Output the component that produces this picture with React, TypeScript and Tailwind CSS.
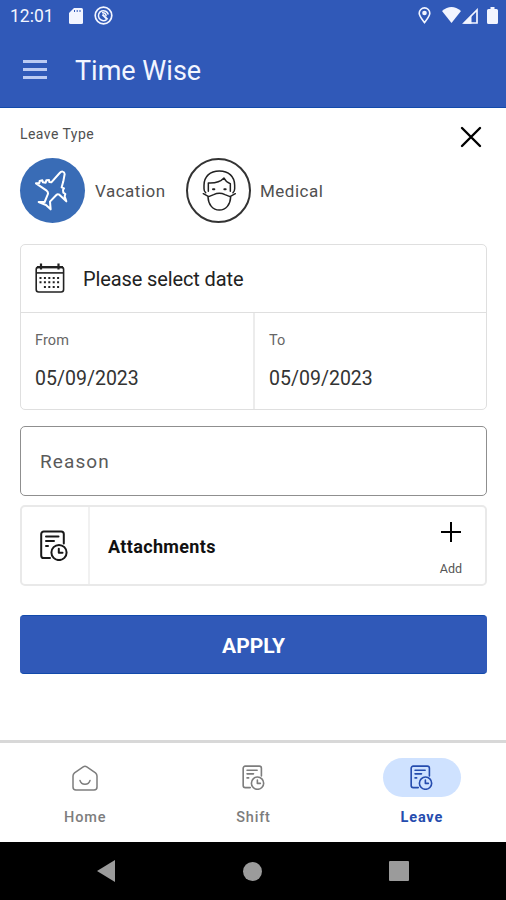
import React from "react";

type IconProps = { className?: string };

const PlaneIcon: React.FC<IconProps> = ({ className }) => (
  <svg className={className} viewBox="73 147 108 129" fill="none" stroke="currentColor" strokeWidth="6" strokeLinejoin="round" strokeLinecap="round">
    <path d="M162 162c-1-9-10-9-15-3l-25 28-6-1-1-6-8 1-2 7-8-1-2-6-8 2-1 6-10 1 32 22q6 5 3 12l-9 22-18 0 22 9 14 13-2-23 19-20q4-4 9-1l21 20-5-15 2-7-6-4-1-8 3-5-7-3 5-18z" />
  </svg>
);

const MaskIcon: React.FC<IconProps> = ({ className }) => (
  <svg className={className} viewBox="78 60 102 123" fill="none" stroke="currentColor" strokeWidth="4.500" strokeLinejoin="round" strokeLinecap="round">
    <path d="M89 128q-5-4-5-12V106c0-26 18-43 46-43s46 17 46 43v10q0 8-5 12" />
    <path d="M97 124V99c20 1 36-3 47-15 4 9 10 14 19 17v23" />
    <path d="m82 131 16 9 15-6q17-8 34 0l15 6 16-9" />
    <path d="M96 141c1 23 14 39 34 39s33-16 34-39" />
    <path d="M111 118h4M145 118h4" strokeWidth="6" />
  </svg>
);

const CalendarIcon: React.FC<IconProps> = ({ className }) => (
  <svg className={className} viewBox="0 0 30 30" fill="none" stroke="currentColor" strokeWidth="1.600">
    <rect x="1.200" y="4" width="27.400" height="25" rx="2.500" />
    <path d="M1.500 9.900h27" />
    <path d="M2 4.200h26" strokeWidth="2.400" />
    <path d="M6 .5v6M23.500 .5v6" strokeWidth="2.200" />
    <path d="M4.500 15h21M4.500 19.300h21" strokeWidth="2" strokeDasharray="2 2.400" />
    <path d="M8.900 24h17" strokeWidth="2" strokeDasharray="2 2.400" />
  </svg>
);

const ShiftIcon: React.FC<IconProps> = ({ className }) => (
  <svg className={className} viewBox="0 0 28 31" fill="none" stroke="currentColor" strokeWidth="2" strokeLinecap="round" strokeLinejoin="round">
    <path d="M10 28H3.800A2.600 2.600 0 0 1 1.200 25.400V4a2.600 2.600 0 0 1 2.600-2.600h17.400A2.600 2.600 0 0 1 23.800 4v9.500" />
    <path d="M6 6.500h12.500M6 11h8M6 16h2" />
    <circle cx="19" cy="22.500" r="7.600" />
    <path d="M18.800 18.800v4h3.700" />
  </svg>
);

const HomeIcon: React.FC<IconProps> = ({ className }) => (
  <svg className={className} viewBox="0 0 26 26" fill="none" stroke="currentColor" strokeWidth="1.500" strokeLinecap="round" strokeLinejoin="round">
    <path d="M1 11q0-2 1.500-3.200l8.700-6q1.800-1.200 3.600 0l8.700 6Q25 9 25 11v11q0 3-3 3H4q-3 0-3-3z" />
    <path d="M8 15.500c1.500 5 8.500 5 10 0" />
  </svg>
);

const StatusBar: React.FC = () => (
  <div className="flex h-8 items-center justify-between pl-[10px] pr-[8px]">
    <div className="flex items-center">
      <span className="w-[59px] text-[17.500px] leading-8">12:01</span>
      <svg className="h-4 w-[14px]" viewBox="0 0 14 16">
        <path d="M5 0h7.500Q14 0 14 1.500v13q0 1.500-1.500 1.500h-11Q0 16 0 14.500V5z" fill="currentColor" />
        <path d="M5.500 2v2M8.200 2v2M11 2v2" stroke="#3059b8" strokeWidth="1" />
      </svg>
      <svg className="mb-[2px] ml-[11px] h-[19px] w-[19px]" viewBox="0 0 19 19" fill="none" stroke="currentColor">
        <circle cx="9.500" cy="9.500" r="8.300" strokeWidth="1.700" />
        <path d="M12.500 13.600A5 5 0 1 1 14.300 8.500" strokeWidth="1.500" />
        <path d="m8.500 8.500 5 5" strokeWidth="2" />
        <path d="M8 6.800q3.800-.6 4.200 3.400" strokeWidth="1.500" />
      </svg>
    </div>
    <div className="flex items-center">
      <svg className="mb-px h-[17px] w-[13px]" viewBox="0 0 13 17" fill="none" stroke="currentColor" strokeWidth="1.600">
        <path d="M6.500 15.600C4 12.300 1.200 9 1.200 6.200a5.300 5.300 0 0 1 10.600 0c0 2.800-2.800 6.100-5.300 9.400z" />
        <circle cx="6.500" cy="6" r="2.300" fill="currentColor" stroke="none" />
      </svg>
      <svg className="mb-[2px] ml-[11px] h-4 w-[19px]" viewBox="0 0 19 16" fill="currentColor">
        <path d="M0 4Q9.500-4 19 4L9.500 16z" />
      </svg>
      <svg className="mb-px ml-px h-4 w-4" viewBox="0 0 16 16">
        <path d="M2 15 15 2v13z" fill="none" stroke="currentColor" strokeWidth="1.700" />
        <path d="M1 15.800 9.500 7v8.800z" fill="currentColor" />
      </svg>
      <svg className="mb-px ml-[9px] h-[17px] w-[11px]" viewBox="0 0 11 17" fill="currentColor">
        <path d="M3.500 0h4v2H9.500Q11 2 11 3.500v12Q11 17 9.500 17h-8Q0 17 0 15.500v-12Q0 2 1.500 2h2z" />
      </svg>
    </div>
  </div>
);

const Header: React.FC = () => (
  <header className="h-[108px] border-b border-[#124aab] bg-[#3059b8] text-[#f2f5ff]">
    <StatusBar />
    <div className="flex h-[76px] items-center pl-[23px]">
      <div className="flex w-[24px] flex-col gap-[5px] pb-[2px]">
        <span className="h-[3px] bg-[#bccbf3]" />
        <span className="h-[3px] bg-[#bccbf3]" />
        <span className="h-[3px] bg-[#bccbf3]" />
      </div>
      <h1 className="ml-[28px] pt-[3px] text-[27px] leading-[75px]">Time Wise</h1>
    </div>
  </header>
);

const DateField: React.FC<{ label: string; value: string }> = ({ label, value }) => (
  <div className="pl-[14px] pt-[17px]">
    <p className="text-[14.500px] leading-[22px] tracking-[0.100px] text-[#666]">{label}</p>
    <p className="mt-[15px] text-[19.500px] leading-[24px] text-[#333]">{value}</p>
  </div>
);

const LeaveForm: React.FC = () => (
  <main className="h-[632px] pl-[20px] pr-[19px]">
    <div className="flex h-[50px] items-start justify-between">
      <p className="pt-[16px] text-[14px] leading-[21px] tracking-[0.450px] text-[#505050]">Leave Type</p>
      <svg className="mr-[5px] mt-[18px] h-[22px] w-[22px]" viewBox="0 0 22 22" stroke="#000" strokeWidth="2.400" strokeLinecap="round">
        <path d="m2 2 18 18M20 2 2 20" />
      </svg>
    </div>

    <div className="flex h-[65px] items-center text-[17px] tracking-[0.500px] text-[#505050]">
      <div className="flex h-[65px] w-[65px] items-center justify-center rounded-full bg-[#396cb6] text-white">
        <PlaneIcon className="h-[43px] w-[36px]" />
      </div>
      <span className="ml-[10px] w-[91px] pt-[2px]">Vacation</span>
      <div className="flex h-[65px] w-[65px] items-center justify-center rounded-full border-2 border-[#333] text-[#222]">
        <MaskIcon className="h-[41px] w-[34px]" />
      </div>
      <span className="ml-[9px] pt-[2px]">Medical</span>
    </div>

    <section className="mt-[21px] h-[166px] rounded-[5px] border border-[#dfdfdf]">
      <div className="flex h-[68px] items-center border-b border-[#dfdfdf] pl-[14px]">
        <CalendarIcon className="mb-px h-[30px] w-[30px] text-[#222]" />
        <span className="ml-[18px] text-[20px] tracking-[-0.120px] text-[#222]">Please select date</span>
      </div>
      <div className="flex h-[96px]">
        <div className="w-[234px] border-r-2 border-[#ececec]">
          <DateField label="From" value="05/09/2023" />
        </div>
        <DateField label="To" value="05/09/2023" />
      </div>
    </section>

    <div className="mt-[16px] flex h-[70px] items-center rounded-[5px] border-[1.500px] border-[#8f8f8f] pl-[19px] pt-[2px] text-[19px] tracking-[1.100px] text-[#5a5a5a]">
      Reason
    </div>

    <section className="mt-[9px] flex h-[81px] rounded-[5px] border-2 border-[#e9e9e9]">
      <div className="flex w-[68px] items-center justify-center border-r-2 border-[#f1f1f1] pr-[3px]">
        <ShiftIcon className="h-[31px] w-[28px] text-[#181818]" />
      </div>
      <span className="ml-[18px] grow self-center pt-[2px] text-[18px] font-bold tracking-[0.350px] text-[#111]">Attachments</span>
      <div className="mr-[21px] flex w-[26px] flex-col items-center">
        <svg className="mt-[15px] h-[20px] w-[20px]" viewBox="0 0 20 20" stroke="#000" strokeWidth="2">
          <path d="M10 0v20M0 10h20" />
        </svg>
        <span className="mt-[19px] text-[12.500px] leading-[16px] text-[#555]">Add</span>
      </div>
    </section>

    <button className="mt-[29px] flex h-[59px] w-full items-center justify-center rounded-[4px] border-y border-[#124aab] bg-[#3059b8] pt-[4px] text-[21px] font-bold text-white">
      APPLY
    </button>
  </main>
);

const tabs = [
  { label: "Home", icon: <HomeIcon className="h-[26px] w-[26px]" />, active: false },
  { label: "Shift", icon: <ShiftIcon className="h-[25px] w-[23px]" />, active: false },
  { label: "Leave", icon: <ShiftIcon className="h-[25px] w-[23px]" />, active: true },
];

const TabBar: React.FC = () => (
  <nav className="grid h-[102px] grid-cols-3 border-t-[3px] border-[#d8d8d8] pl-px">
    {tabs.map((t) => (
      <div
        key={t.label}
        className={`flex flex-col items-center pt-[15px] ${t.active ? "text-[#254cae]" : "text-[#7d7d7d]"}`}
      >
        <div className={`flex h-[39px] w-[78px] items-center justify-center rounded-full ${t.active ? "bg-[#cfe2ff]" : ""}`}>
          {t.icon}
        </div>
        <span className={`mt-[11px] text-[14.500px] leading-[20px] tracking-[0.800px] ${t.active ? "font-bold" : "font-medium"}`}>
          {t.label}
        </span>
      </div>
    ))}
  </nav>
);

const SystemBar: React.FC = () => (
  <footer className="flex h-[58px] items-center justify-between bg-black px-[97px] text-[#9b9b9b]">
    <svg className="h-[22px] w-[18px]" viewBox="0 0 18 22" fill="currentColor">
      <path d="M18 0v22L0 11z" />
    </svg>
    <span className="h-[19px] w-[19px] rounded-full bg-[#9b9b9b]" />
    <span className="h-[20px] w-[20px] rounded-[1px] bg-[#9b9b9b]" />
  </footer>
);

const App: React.FC = () => (
  <div className="h-[900px] w-[506px] overflow-hidden bg-white font-['Roboto',sans-serif]">
    <Header />
    <LeaveForm />
    <TabBar />
    <SystemBar />
  </div>
);

export default App;
